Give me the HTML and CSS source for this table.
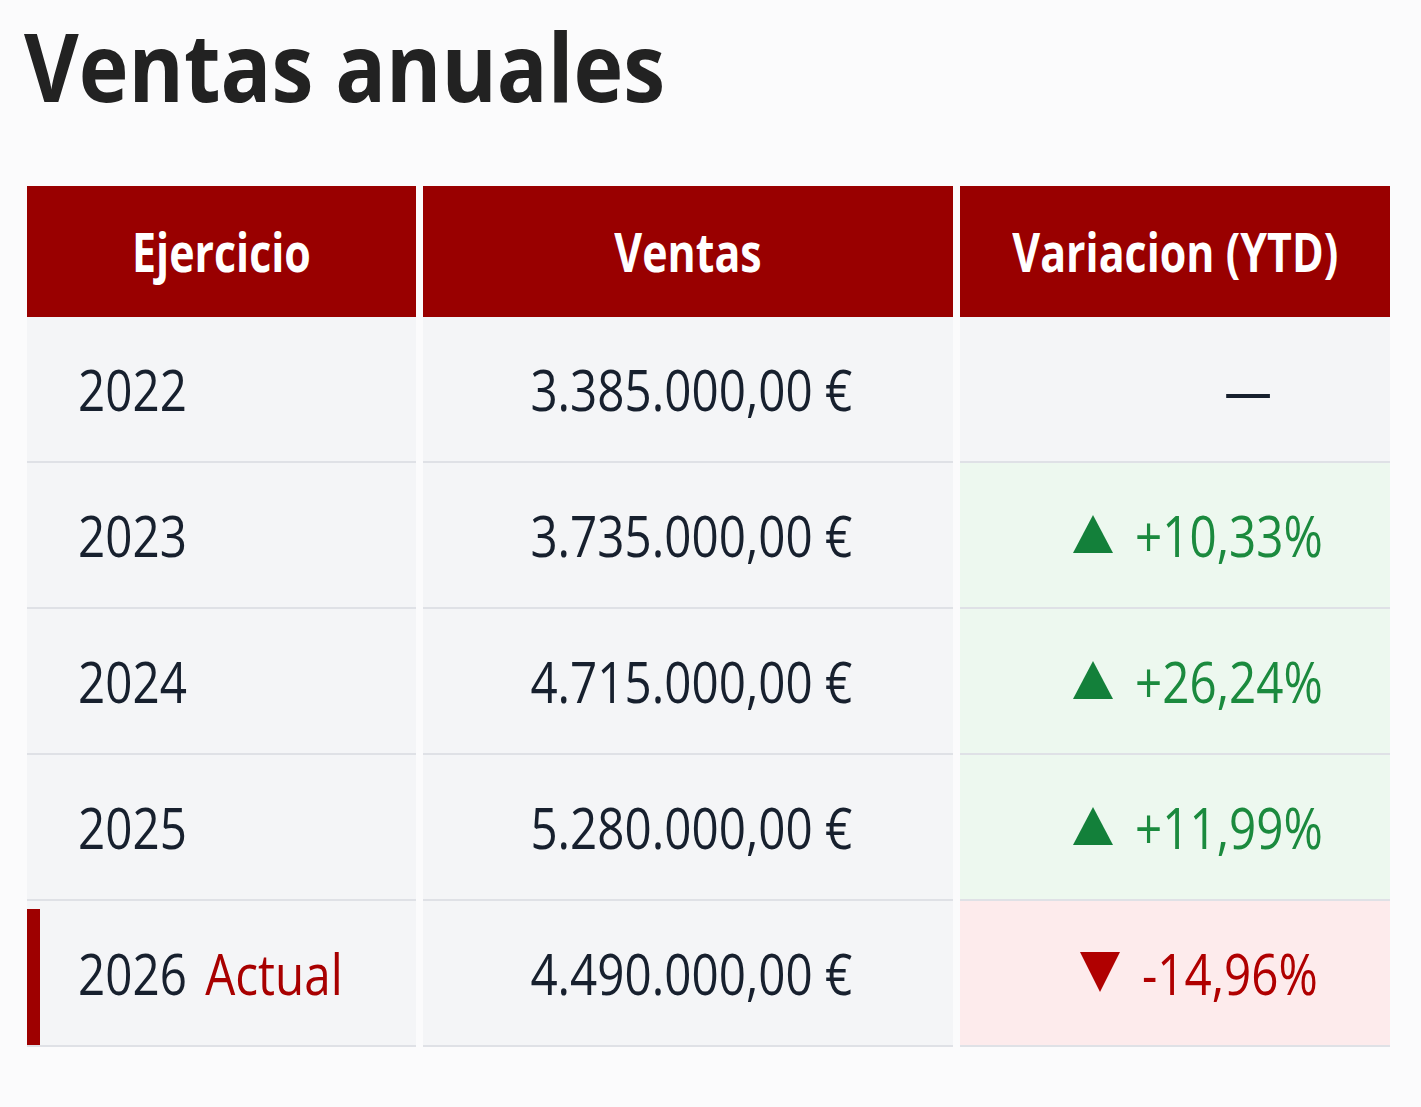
FILE: index.html
```html
<!DOCTYPE html>
<html lang="es">
<head>
<meta charset="utf-8">
<title>Ventas anuales</title>
<link rel="stylesheet" href="styles.css">
</head>
<body>
<main class="page">
  <h1 class="title">Ventas anuales</h1>
  <div class="table">
    <div class="th"><span class="sx sx-head">Ejercicio</span></div>
    <div class="th"><span class="sx sx-head">Ventas</span></div>
    <div class="th"><span class="sx sx-head">Variacion (YTD)</span></div>

    <div class="td year"><span class="sx sx-left">2022</span></div>
    <div class="td amount"><span class="sx">3.385.000,00 €</span></div>
    <div class="td var var-none"><span class="sx dash">—</span></div>

    <div class="td year"><span class="sx sx-left">2023</span></div>
    <div class="td amount"><span class="sx">3.735.000,00 €</span></div>
    <div class="td var var-up"><svg class="tri" viewBox="0 0 40 40"><polygon points="20,1 40,39 0,39"/></svg><span class="sx sx-left">+10,33%</span></div>

    <div class="td year"><span class="sx sx-left">2024</span></div>
    <div class="td amount"><span class="sx">4.715.000,00 €</span></div>
    <div class="td var var-up"><svg class="tri" viewBox="0 0 40 40"><polygon points="20,1 40,39 0,39"/></svg><span class="sx sx-left">+26,24%</span></div>

    <div class="td year"><span class="sx sx-left">2025</span></div>
    <div class="td amount"><span class="sx">5.280.000,00 €</span></div>
    <div class="td var var-up"><svg class="tri" viewBox="0 0 40 40"><polygon points="20,1 40,39 0,39"/></svg><span class="sx sx-left">+11,99%</span></div>

    <div class="td year current"><span class="sx sx-left">2026 <span class="tag">Actual</span></span></div>
    <div class="td amount"><span class="sx">4.490.000,00 €</span></div>
    <div class="td var var-down"><svg class="tri" viewBox="0 0 40 40"><polygon points="0,0 40,0 20,40"/></svg><span class="sx sx-left">-14,96%</span></div>
  </div>
</main>
</body>
</html>
```

FILE: styles.css
```css
html, body {
  margin: 0;
  padding: 0;
  background: #fbfbfc;
}

.page {
  padding: 0 31px 0 27px;
  font-family: "Open Sans", "Noto Sans", sans-serif;
}

.title {
  margin: 0 0 56px -3px;
  font-size: 95px;
  line-height: normal;
  font-weight: 700;
  color: #222222;
  transform: scaleX(0.887);
  transform-origin: left center;
}

.sx {
  display: inline-block;
  white-space: nowrap;
  transform: scaleX(0.85);
  transform-origin: center;
}

.sx-left {
  transform-origin: left center;
}

.sx-head {
  transform: scaleX(0.81);
}

.table {
  display: grid;
  grid-template-columns: 389px 530px 430px;
  column-gap: 7px;
  width: 1363px;
}

.th {
  height: 131px;
  background: #990000;
  color: #ffffff;
  font-size: 53px;
  font-weight: 700;
  display: flex;
  align-items: center;
  justify-content: center;
}

.td {
  height: 144px;
  border-bottom: 2px solid #dfe1e6;
  background: #f4f5f7;
  color: #17202e;
  font-size: 56px;
  display: flex;
  align-items: center;
}

.year {
  padding-left: 51px;
  position: relative;
}

.amount {
  justify-content: center;
  padding-left: 6px;
}

.var {
  justify-content: center;
  padding-left: 78px;
}

.var-none {
  padding-left: 146px;
}

.dash {
  color: #17202e;
}

.var-up {
  background: #edf8ef;
  color: #1b8a3e;
}

.var-down {
  background: #fdebec;
  color: #b00000;
}

.tri {
  flex: none;
  width: 40px;
  height: 40px;
  margin-right: 22px;
  margin-top: -2px;
}

.var-up .tri {
  fill: #13803a;
}

.var-down .tri {
  fill: #b00000;
}

.tag {
  color: #a80000;
  margin-left: 7px;
}

.current::before {
  content: "";
  position: absolute;
  left: 0;
  top: 8px;
  bottom: 0;
  width: 13px;
  background: #9e0000;
}
```
